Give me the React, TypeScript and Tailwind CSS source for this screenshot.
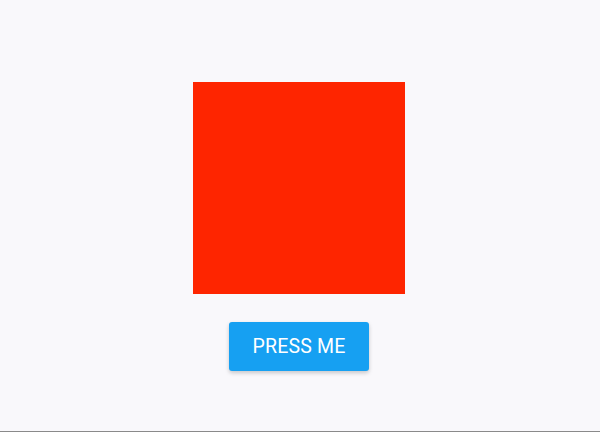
export default function App() {
  return (
    <div className="h-[432px] w-[600px] bg-[#f9f8fb] border-b border-[#8a8a8a] flex flex-col items-center pt-[82px] font-['Roboto',sans-serif]">
      <div className="h-[212px] w-[212px] bg-[#fe2500] ml-[-2px]" />
      <button className="mt-[28px] ml-[-2px] h-[49px] w-[140px] rounded-[3px] bg-[#16a0f2] text-white text-[19.5px] tracking-[0.2px] shadow-[0_2px_4px_rgba(0,0,0,0.2)]">
        PRESS ME
      </button>
    </div>
  );
}
